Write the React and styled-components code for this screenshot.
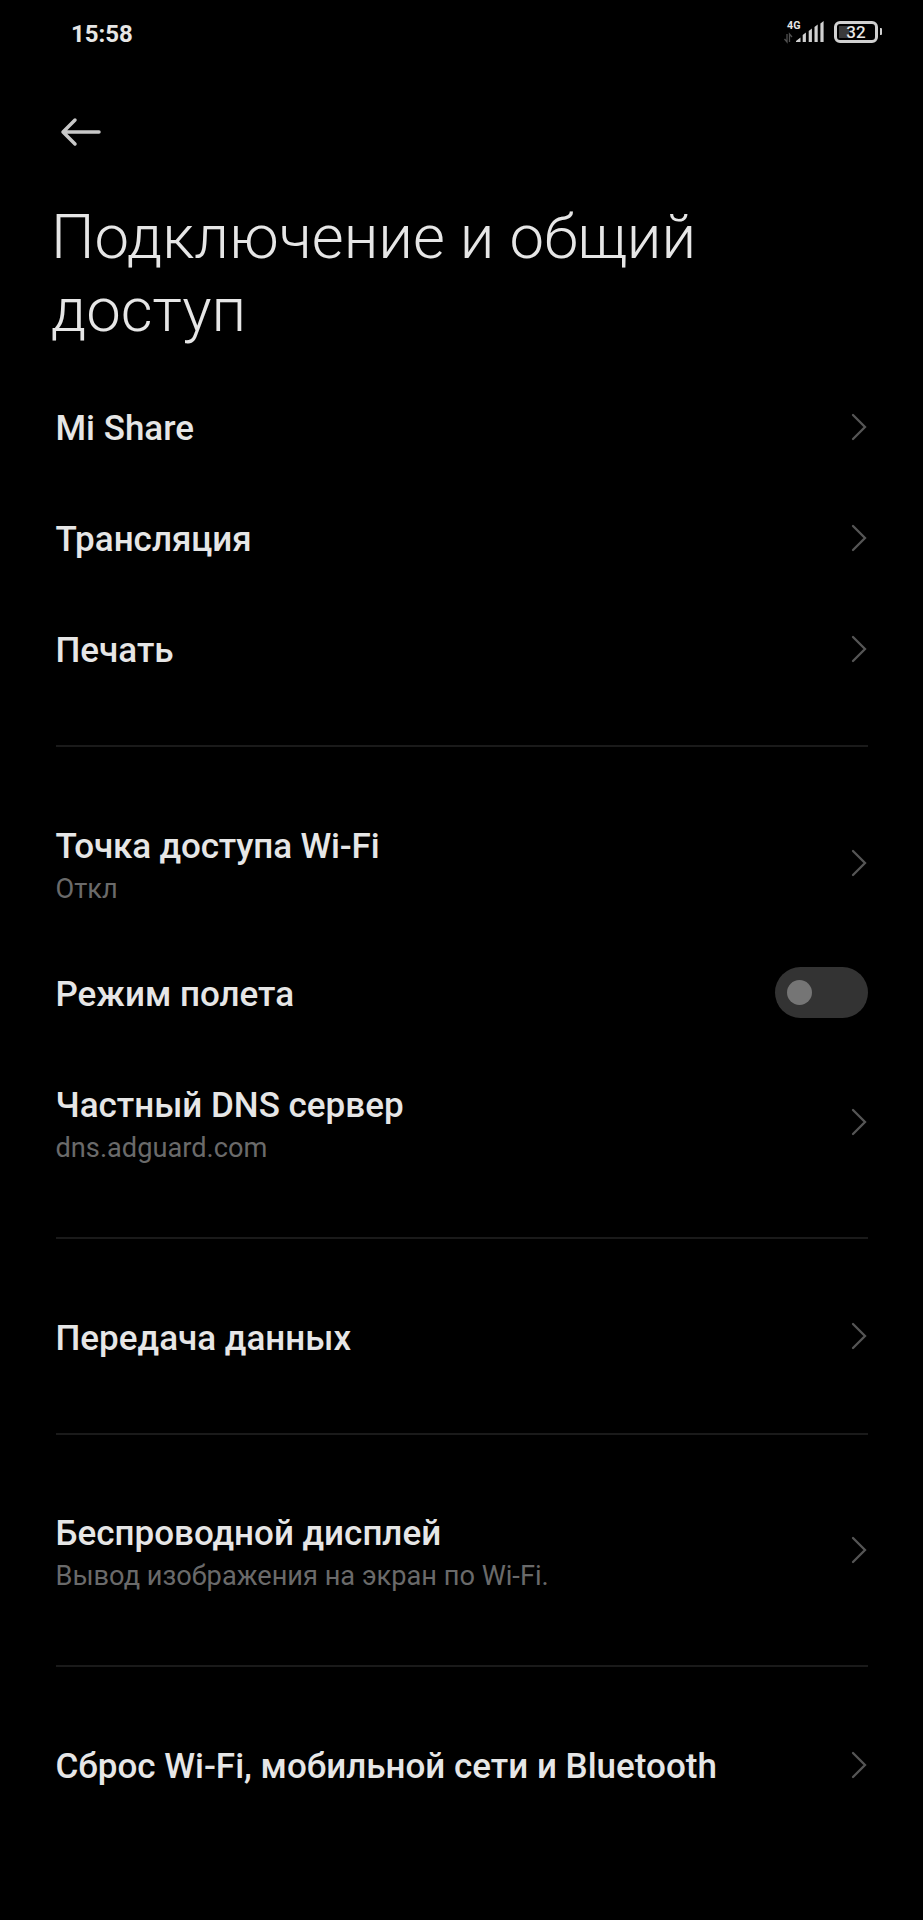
import React from 'react';
import styled, { createGlobalStyle } from 'styled-components';

const Global = createGlobalStyle`
  *{box-sizing:border-box}
  body{margin:0;background:#000;font-family:Roboto,"Noto Sans",sans-serif;color:#e6e6e6}
`;
const Screen = styled.main`width:923px;height:1920px;background:#000;overflow:hidden;`;
const StatusBar = styled.header`
  height:66px;display:flex;align-items:center;justify-content:space-between;padding:0 41px 0 71px;
`;
const Time = styled.time`font-size:24px;font-weight:700;line-height:28px;padding-top:2px;`;
const StatusIcons = styled.div`display:flex;align-items:center;gap:10px;height:36px;margin-bottom:3px;`;
const Signal = styled.div`width:41px;height:26px;position:relative;`;
const Network = styled.span`
  position:absolute;left:4px;top:1px;font-size:10.7px;line-height:11px;font-weight:700;
`;
const Battery = styled.div`display:flex;align-items:center;gap:2px;
  &::after{content:"";width:2px;height:7px;border-radius:0 1px 1px 0;background:#cfcfcf;}
`;
const Charge = styled.div`
  width:44px;height:22px;border:3px solid #d0d0d0;border-radius:6px;
  background:linear-gradient(#3a3a3a,#3a3a3a) 2px 2px / 10px 12px no-repeat;
  font-size:17px;line-height:17px;font-weight:500;text-align:center;
`;
const Back = styled.button`
  display:block;width:44px;height:32px;padding:0;border:0;background:none;margin:50px 0 0 59px;
`;
const Title = styled.h1`
  margin:53px 52px 0 51px;font-size:61.6px;line-height:73px;font-weight:300;height:147px;
`;
const List = styled.section`padding:23px 55px 0 56px;`;
const Row = styled.div`
  display:flex;align-items:center;justify-content:space-between;height:${p => p.$tall ? 147.8 : 111}px;
`;
const Texts = styled.div`padding-top:${p => p.$tall ? 6 : 5}px;margin-left:-0.5px;`;
const Label = styled.div`
  font-size:35px;line-height:42px;font-weight:500;white-space:nowrap;
  letter-spacing:${p => p.$tight ? '-0.15px' : 'normal'};
`;
const Note = styled.div`font-size:27.2px;line-height:34px;color:#6a6a6a;margin-top:4px;`;
const Divider = styled.hr`border:0;height:2px;background:#1a1a1a;margin:41px 0 42px;`;
const Arrow = styled.svg`display:block;width:17px;height:28px;flex:none;`;
const Toggle = styled.button`
  width:93px;height:51px;border-radius:26px;border:0;padding:0 12px;background:#333;display:flex;align-items:center;
  &::before{content:"";width:25px;height:25px;border-radius:50%;background:#757575;}
`;
function Item({ label, note, toggle, tight }) {
  return <Row $tall={!!note}>
    <Texts $tall={!!note}><Label $tight={tight}>{label}</Label>{note && <Note>{note}</Note>}</Texts>
    {toggle ? <Toggle aria-label={label} /> : <Arrow viewBox="0 0 17 28"><path d="M2 2 14 14 2 26" fill="none" stroke="#555" strokeWidth="2.3" strokeLinecap="round" /></Arrow>}
  </Row>;
}
export default function App() {
  return <Screen><Global />
    <StatusBar><Time>15:58</Time>
      <StatusIcons>
        <Signal><Network>4G</Network>
          <svg width="41" height="25" viewBox="0 0 41 25">
            <path d="M4 15v8l-2.500-3M6.500 23v-8l2.500 3" fill="none" stroke="#505050" strokeWidth="1.3" />
            <path d="M13 23v-1l4.500-3.500V23zM19.700 23v-7l3.200-2.500V23zM25.700 23V12l3.200-2.500V23zM31.500 23V8l3.200-2.500V23zM37.400 23V4.500l3.200-2.500V23z" fill="#d0d0d0" />
          </svg>
        </Signal>
        <Battery><Charge>32</Charge></Battery>
      </StatusIcons>
    </StatusBar>
    <Back aria-label="Назад"><svg width="44" height="32"><path d="M16 4 4 16l12 12M4 16h36" fill="none" stroke="#c8c8c8" strokeWidth="3.5" strokeLinecap="round" strokeLinejoin="round" /></svg></Back>
    <Title>Подключение и общий доступ</Title>
    <List>
      <Item label="Mi Share" /><Item label="Трансляция" /><Item label="Печать" />
      <Divider />
      <Item label="Точка доступа Wi-Fi" note="Откл" tight />
      <Item label="Режим полета" toggle />
      <Item label="Частный DNS сервер" note="dns.adguard.com" />
      <Divider />
      <Item label="Передача данных" />
      <Divider />
      <Item label="Беспроводной дисплей" note="Вывод изображения на экран по Wi-Fi." />
      <Divider />
      <Item label="Сброс Wi-Fi, мобильной сети и Bluetooth" />
    </List>
  </Screen>;
}
